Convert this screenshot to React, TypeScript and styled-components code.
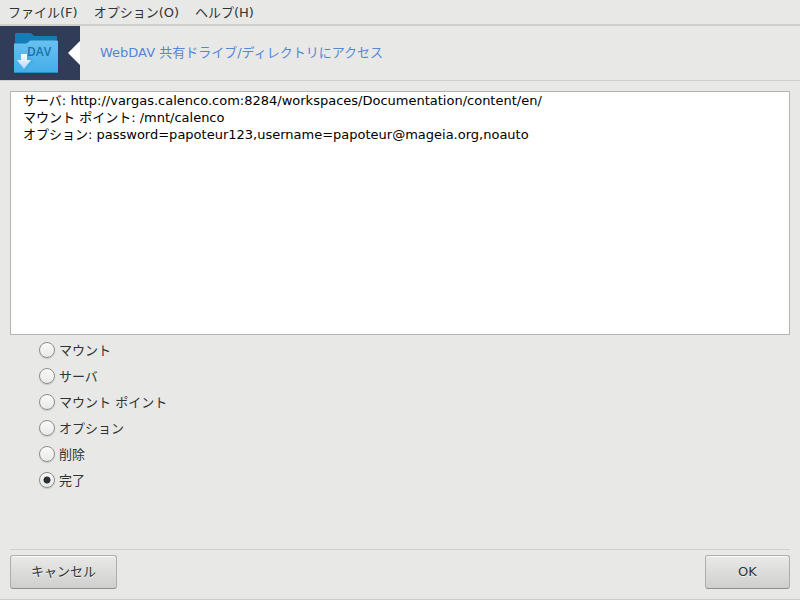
import React, { useState } from "react";
import styled, { createGlobalStyle } from "styled-components";

const GlobalStyle = createGlobalStyle`
  * { box-sizing: border-box; }
  body {
    margin: 0;
    background: #e8e8e6;
    color: #2e3436;
    font-family: "DejaVu Sans", "Noto Sans CJK JP", sans-serif;
    font-size: 13px;
    line-height: 17px;
  }
  button, textarea, input { font: inherit; color: inherit; }
`;

const Window = styled.div`
  display: flex;
  flex-direction: column;
  min-height: 100vh;
  border-bottom: 1px solid #cbcbc9;
`;

const MenuBar = styled.nav`
  display: flex;
  height: 26px;
  padding-bottom: 1px;
  border-bottom: 2px solid #cfcfcc;
`;

const MenuButton = styled.button`
  padding: 2px 8px 0;
  border: 0;
  background: none;
  white-space: nowrap;
`;

const Banner = styled.header`
  display: flex;
  align-items: center;
  gap: 20px;
  height: 55px;
  border-bottom: 1px solid #cfcfcd;
`;

const BannerArt = styled.svg`
  display: block;
  flex: none;
  width: 80px;
  height: 54px;
`;

const Title = styled.h1`
  margin: 0;
  padding-bottom: 2px;
  color: #5486d8;
  font-size: 13px;
  font-weight: 400;
`;

const Content = styled.main`
  display: flex;
  flex: 1;
  flex-direction: column;
  padding: 10px 10px 0;
`;

const Summary = styled.textarea`
  display: block;
  width: 100%;
  height: 244px;
  padding: 0 12px;
  border: 1px solid #b4b4b1;
  border-radius: 0;
  outline: 0;
  background: #fff;
  color: #000;
  resize: none;
`;

const Choices = styled.fieldset`
  display: flex;
  flex-direction: column;
  align-items: flex-start;
  margin: 2px 0 0;
  padding: 0 29px;
  border: 0;
`;

const Choice = styled.label`
  display: flex;
  align-items: center;
  gap: 4px;
  height: 26px;
`;

const Radio = styled.input`
  appearance: none;
  width: 16px;
  height: 16px;
  margin: 0;
  border: 1px solid #8e8f8a;
  border-radius: 50%;
  background: linear-gradient(#fafafa, #e9e9e8);
  box-shadow: 0 1px 1px #c8c8c5;

  &:checked {
    background: radial-gradient(circle, #2a3033 0 3px, transparent 4px),
      linear-gradient(#fafafa, #e9e9e8);
  }
`;

const Actions = styled.footer`
  display: flex;
  justify-content: space-between;
  margin: 0 10px 10px;
  padding-top: 5px;
  border-top: 1px solid #cfcfcd;
`;

const ActionButton = styled.button<{ $width: number }>`
  width: ${({ $width }) => $width}px;
  height: 34px;
  padding: 0 0 2px;
  border: 1px solid #adaeaa;
  border-bottom-color: #90918a;
  border-radius: 3px;
  background: linear-gradient(#e9e9e7, #cfd0cd);
  box-shadow: inset 0 1px #fafafa;
  text-shadow: 0 1px #f3f3f2;
`;

const menus = ["ファイル(F)", "オプション(O)", "ヘルプ(H)"];
const choices = ["マウント", "サーバ", "マウント ポイント", "オプション", "削除", "完了"];
const summary = [
  "サーバ: http://vargas.calenco.com:8284/workspaces/Documentation/content/en/",
  "マウント ポイント: /mnt/calenco",
  "オプション: password=papoteur123,username=papoteur@mageia.org,noauto",
].join("\n");

function DavArt() {
  return (
    <BannerArt viewBox="0 0 80 54" aria-hidden="true">
      <defs>
        <linearGradient id="folder" x2="0" y2="1">
          <stop stopColor="#69c1f0" />
          <stop offset="1" stopColor="#42aeea" />
        </linearGradient>
        <linearGradient id="arrow" x2="0" y2="1">
          <stop stopColor="#fff" />
          <stop offset="1" stopColor="#b4d6fa" />
        </linearGradient>
        <linearGradient id="shade" x2="1" y2="1">
          <stop stopColor="#237fb5" stopOpacity=".55" />
          <stop offset="1" stopColor="#42aeea" stopOpacity="0" />
        </linearGradient>
      </defs>
      <path d="M0 0h80v54H0z" fill="#303c58" />
      <path d="M80 15v24L68 27z" fill="#fff" />
      <path d="M15 8q0-1 1-1h14q1 0 2 1l2 2h22q1 0 1 1v10H15z" fill="#157cb5" />
      <path d="M14 17.500h12q1 0 2-1l1-1q1-1 2-1h26q1 0 1 1V46q0 1-1 1H15q-1 0-1-1z" fill="url(#folder)" />
      <path d="M14 46.500h44" stroke="#288dc5" />
      <path d="M27 28l8 8-9 9-5-4z" fill="url(#shade)" />
      <path d="M21 28h6v6h4l-7 9-7-9h4z" fill="url(#arrow)" />
      <text x="27" y="30" fill="#1474aa" fontFamily="Open Sans, sans-serif" fontWeight="600" fontSize="12">
        DAV
      </text>
    </BannerArt>
  );
}

export default function App() {
  const [selected, setSelected] = useState("完了");

  return (
    <>
      <GlobalStyle />
      <Window lang="ja">
        <MenuBar>
          {menus.map((menu) => (
            <MenuButton key={menu} type="button">{menu}</MenuButton>
          ))}
        </MenuBar>
        <Banner>
          <DavArt />
          <Title>WebDAV 共有ドライブ/ディレクトリにアクセス</Title>
        </Banner>
        <Content>
          <Summary readOnly aria-label="WebDAV" value={summary} />
          <Choices aria-label="WebDAV">
            {choices.map((choice) => (
              <Choice key={choice}>
                <Radio
                  type="radio"
                  name="action"
                  checked={selected === choice}
                  onChange={() => setSelected(choice)}
                />
                {choice}
              </Choice>
            ))}
          </Choices>
        </Content>
        <Actions>
          <ActionButton type="button" $width={107}>キャンセル</ActionButton>
          <ActionButton type="button" $width={85}>OK</ActionButton>
        </Actions>
      </Window>
    </>
  );
}
